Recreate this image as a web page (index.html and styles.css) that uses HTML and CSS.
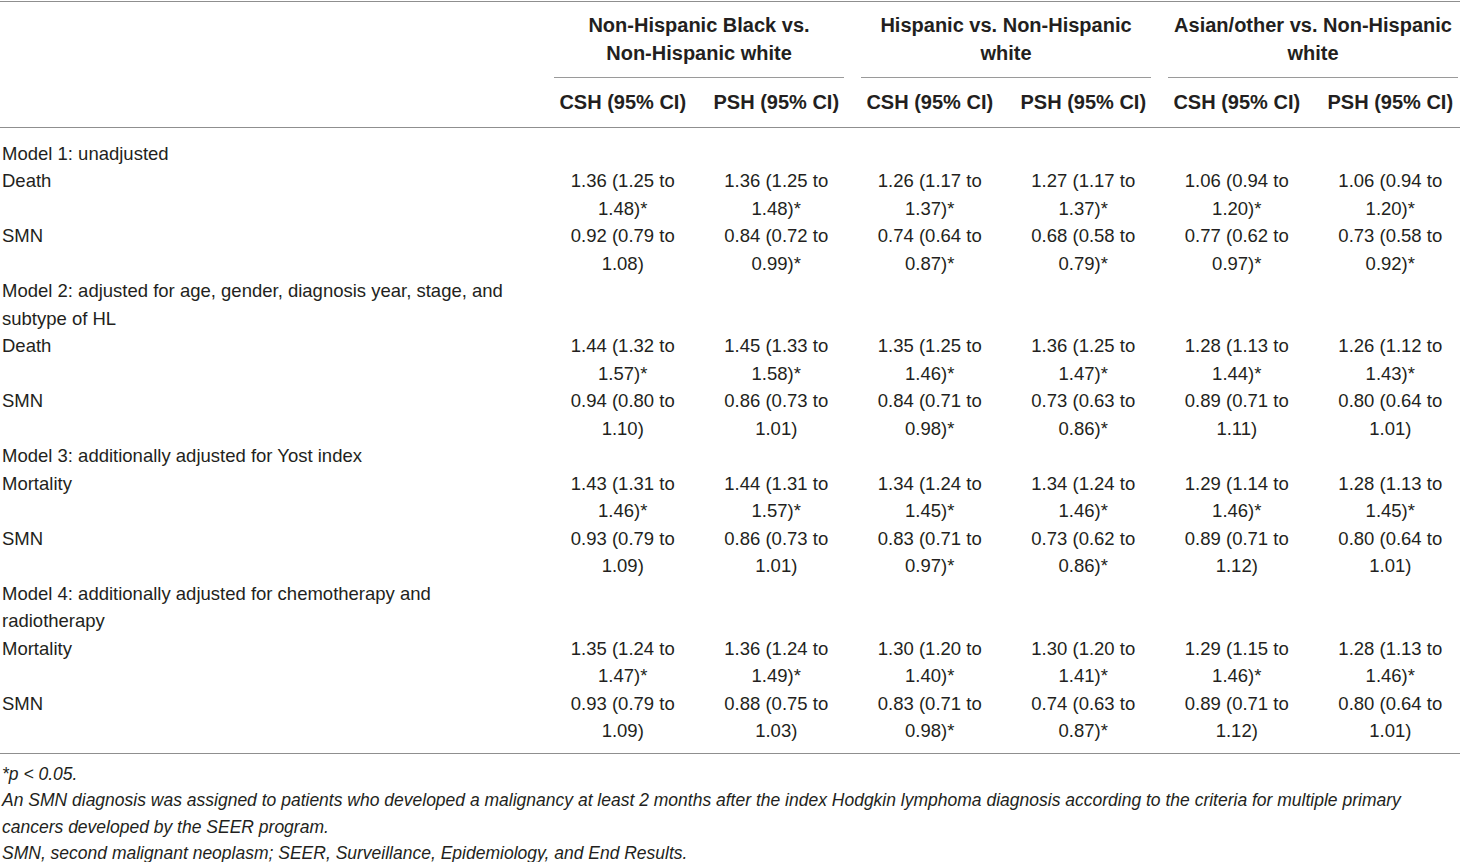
FILE: index.html
```html
<!DOCTYPE html>
<html>
<head>
<meta charset="utf-8">
<link rel="stylesheet" href="styles.css">
</head>
<body>
<div class="page">
<table class="tbl">
<colgroup>
<col class="c-label">
<col class="c-val"><col class="c-val"><col class="c-val"><col class="c-val"><col class="c-val"><col class="c-val">
</colgroup>
<thead>
<tr class="hr1">
<th class="blank" rowspan="2"></th>
<th colspan="2" class="grp"><div class="grp-in"><span class="nw">Non-Hispanic</span> Black vs. <span class="nw">Non-Hispanic</span> white</div></th>
<th colspan="2" class="grp"><div class="grp-in">Hispanic vs. <span class="nw">Non-Hispanic</span> white</div></th>
<th colspan="2" class="grp"><div class="grp-in">Asian/other vs. <span class="nw">Non-Hispanic</span> white</div></th>
</tr>
<tr class="hr2">
<th>CSH (95% CI)</th><th>PSH (95% CI)</th>
<th>CSH (95% CI)</th><th>PSH (95% CI)</th>
<th>CSH (95% CI)</th><th>PSH (95% CI)</th>
</tr>
</thead>
<tbody>
<tr class="first"><td class="lbl">Model 1: unadjusted</td><td></td><td></td><td></td><td></td><td></td><td></td></tr>
<tr><td class="lbl">Death</td>
<td>1.36 (1.25 to 1.48)*</td><td>1.36 (1.25 to 1.48)*</td><td>1.26 (1.17 to 1.37)*</td><td>1.27 (1.17 to 1.37)*</td><td>1.06 (0.94 to 1.20)*</td><td>1.06 (0.94 to 1.20)*</td></tr>
<tr><td class="lbl">SMN</td>
<td>0.92 (0.79 to 1.08)</td><td>0.84 (0.72 to 0.99)*</td><td>0.74 (0.64 to 0.87)*</td><td>0.68 (0.58 to 0.79)*</td><td>0.77 (0.62 to 0.97)*</td><td>0.73 (0.58 to 0.92)*</td></tr>
<tr><td class="lbl">Model 2: adjusted for age, gender, diagnosis year, stage, and subtype of HL</td><td></td><td></td><td></td><td></td><td></td><td></td></tr>
<tr><td class="lbl">Death</td>
<td>1.44 (1.32 to 1.57)*</td><td>1.45 (1.33 to 1.58)*</td><td>1.35 (1.25 to 1.46)*</td><td>1.36 (1.25 to 1.47)*</td><td>1.28 (1.13 to 1.44)*</td><td>1.26 (1.12 to 1.43)*</td></tr>
<tr><td class="lbl">SMN</td>
<td>0.94 (0.80 to 1.10)</td><td>0.86 (0.73 to 1.01)</td><td>0.84 (0.71 to 0.98)*</td><td>0.73 (0.63 to 0.86)*</td><td>0.89 (0.71 to 1.11)</td><td>0.80 (0.64 to 1.01)</td></tr>
<tr><td class="lbl">Model 3: additionally adjusted for Yost index</td><td></td><td></td><td></td><td></td><td></td><td></td></tr>
<tr><td class="lbl">Mortality</td>
<td>1.43 (1.31 to 1.46)*</td><td>1.44 (1.31 to 1.57)*</td><td>1.34 (1.24 to 1.45)*</td><td>1.34 (1.24 to 1.46)*</td><td>1.29 (1.14 to 1.46)*</td><td>1.28 (1.13 to 1.45)*</td></tr>
<tr><td class="lbl">SMN</td>
<td>0.93 (0.79 to 1.09)</td><td>0.86 (0.73 to 1.01)</td><td>0.83 (0.71 to 0.97)*</td><td>0.73 (0.62 to 0.86)*</td><td>0.89 (0.71 to 1.12)</td><td>0.80 (0.64 to 1.01)</td></tr>
<tr><td class="lbl">Model 4: additionally adjusted for chemotherapy and radiotherapy</td><td></td><td></td><td></td><td></td><td></td><td></td></tr>
<tr><td class="lbl">Mortality</td>
<td>1.35 (1.24 to 1.47)*</td><td>1.36 (1.24 to 1.49)*</td><td>1.30 (1.20 to 1.40)*</td><td>1.30 (1.20 to 1.41)*</td><td>1.29 (1.15 to 1.46)*</td><td>1.28 (1.13 to 1.46)*</td></tr>
<tr class="last"><td class="lbl">SMN</td>
<td>0.93 (0.79 to 1.09)</td><td>0.88 (0.75 to 1.03)</td><td>0.83 (0.71 to 0.98)*</td><td>0.74 (0.63 to 0.87)*</td><td>0.89 (0.71 to 1.12)</td><td>0.80 (0.64 to 1.01)</td></tr>
</tbody>
</table>
<div class="notes">
<p>*p &lt; 0.05.</p>
<p>An SMN diagnosis was assigned to patients who developed a malignancy at least 2 months after the index Hodgkin lymphoma diagnosis according to the criteria for multiple primary cancers developed by the SEER program.</p>
<p>SMN, second malignant neoplasm; SEER, Surveillance, Epidemiology, and End Results.</p>
</div>
</div>
</body>
</html>
```
FILE: styles.css
```css
html, body {
  margin: 0;
  padding: 0;
  background: #ffffff;
  overflow: hidden;
}
body {
  font-family: "Liberation Sans", Arial, Helvetica, sans-serif;
  color: #231f20;
}
.page {
  padding-top: 1px;
  width: 1467px;
}
.tbl {
  width: 1467px;
  table-layout: fixed;
  border-collapse: collapse;
  border-top: 1px solid #8f8f8f;
  border-bottom: 1px solid #8f8f8f;
  font-size: 18.5px;
  line-height: 27.5px;
}
.c-label { width: 546px; }
.c-val { width: 153.5px; }
th {
  font-weight: bold;
  font-size: 20px;
  text-align: center;
}
.nw { white-space: nowrap; }
th.blank {
  border-bottom: 1px solid #8f8f8f;
  padding: 0;
}
.hr1 th.grp {
  padding: 10px 9px 0 8px;
  vertical-align: bottom;
}
.grp-in {
  padding-bottom: 10px;
  border-bottom: 1px solid #9a9a9a;
}
.hr2 th {
  padding: 11px 0 10px 0;
  border-bottom: 1px solid #8f8f8f;
  white-space: nowrap;
}
td {
  padding: 0 8px;
  text-align: center;
  vertical-align: top;
}
td.lbl {
  text-align: left;
  padding: 0 10px 0 2px;
}
.first td { padding-top: 12px; }
.last td { padding-bottom: 8px; }
.notes {
  padding: 7px 0 0 2px;
  width: 1456px;
  font-style: italic;
  font-size: 17.5px;
  line-height: 26.5px;
}
.notes p {
  margin: 0;
}
```
